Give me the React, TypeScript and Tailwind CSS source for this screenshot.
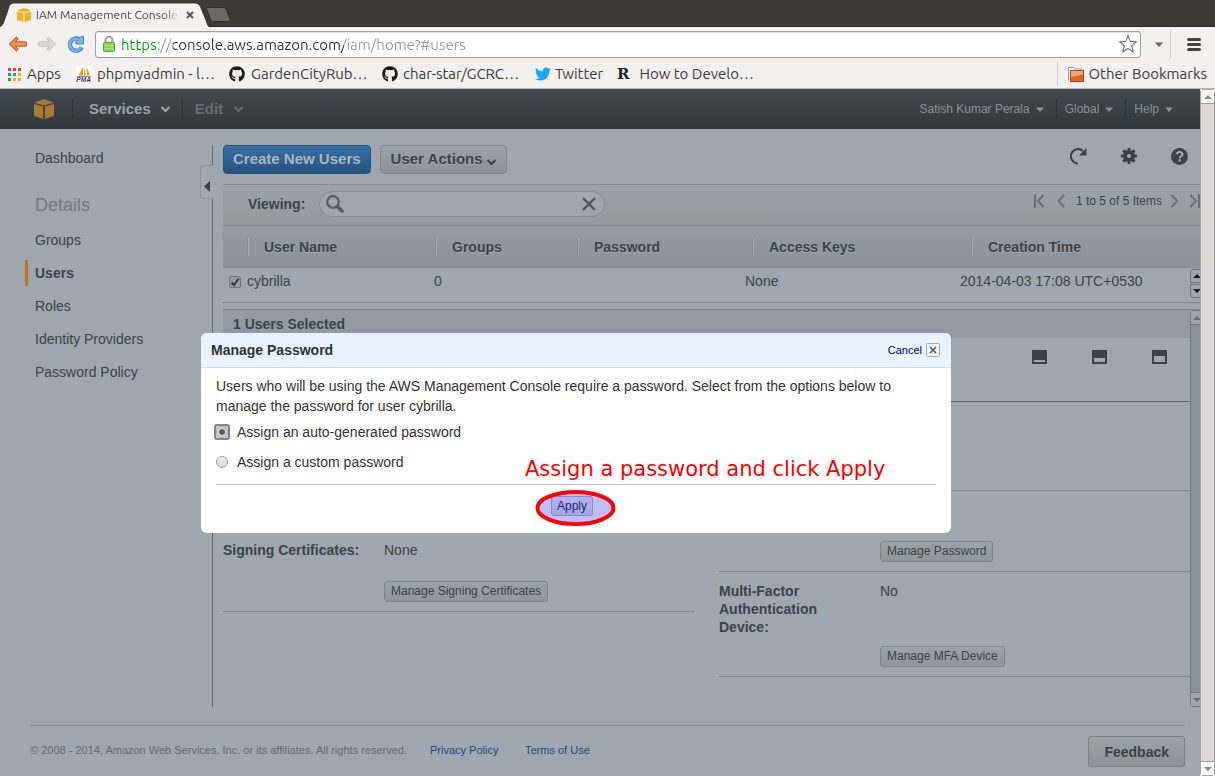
import React from "react";
import { FaGithub, FaTwitter } from "react-icons/fa";

const navItems = ["Groups", "Users", "Roles", "Identity Providers", "Password Policy"];

function Cube({ className, color }: { className: string; color: string }) {
  return (
    <svg viewBox="0 0 20 20" className={className} fill={color} aria-hidden="true">
      <path d="M0 3.6 10 0l10 3.6L10 6.4z" />
      <path d="M0 5l9.2 2.6V20L0 17z" />
      <path d="M20 5l-9.2 2.6V20L20 17z" />
    </svg>
  );
}

function Chevron({ className }: { className: string }) {
  return (
    <svg viewBox="0 0 9 6" className={className} aria-hidden="true">
      <path d="M0.5 1 4.5 5 8.5 1" fill="none" stroke="currentColor" strokeWidth="2.2" />
    </svg>
  );
}

function Caret() {
  return (
    <svg viewBox="0 0 8 5" className="h-[5px] w-2" aria-hidden="true">
      <path d="M0 0.5h8L4 5z" fill="currentColor" />
    </svg>
  );
}

function PmaIcon() {
  return (
    <svg viewBox="0 0 16 16" className="size-4 shrink-0" aria-hidden="true">
      <rect width="16" height="16" fill="#fff" />
      <path d="M7 1 2.5 9.5H7zM8.2 1.5V9.5H10zM10.5 2c2 2 3 5 3.3 7.5H11z" fill="#f6a000" />
      <path d="M1 10h14l-.5 1H1.5z" fill="#8a8aa8" />
      <text x="0.3" y="15.8" fontSize="6.6" fontWeight="bold" fontStyle="italic" fill="#3a3a78" fontFamily="Liberation Sans">PMA</text>
    </svg>
  );
}

function AppsIcon() {
  const colors = ["#e83a35", "#e83a35", "#e83a35", "#1fa05a", "#3c7fe0", "#f2b50f", "#1fa05a", "#f2b50f", "#f2b50f"];
  return (
    <svg viewBox="0 0 13 13" className="size-[13px] shrink-0" aria-hidden="true">
      {colors.map((c, i) => (
        <rect key={i} x={(i % 3) * 5} y={Math.floor(i / 3) * 5} width="3" height="3" fill={c} />
      ))}
    </svg>
  );
}

function TabStrip() {
  return (
    <div className="flex h-[27px] items-end border-b border-[#2c2b28] bg-[#3c3b37]">
      <div className="relative -mb-px h-6 w-[209px] shrink-0">
        <svg viewBox="0 0 209 24" className="absolute inset-0 h-6 w-[209px]" aria-hidden="true">
          <path d="M0 24C4 22 4 19 6 14L9 5C10 1.5 11 0.5 15 0.5H194C198 0.5 199 1.5 200.500 5L205 16C207 21 207 23 209 24z" fill="#f2f1f0" />
        </svg>
        <div className="relative flex h-6 items-center pl-[17px] pr-[13px]">
          <Cube color="#f5b324" className="h-[14px] w-[14px] shrink-0" />
          <span className="ml-[5px] min-w-0 flex-1 whitespace-nowrap text-[12px] text-[#4a4a4a] [mask-image:linear-gradient(to_right,#000_90%,transparent)]">
            IAM Management Console
          </span>
          <button aria-label="Close tab" className="ml-[5px] flex size-3 items-center justify-center text-[#555]">
            <svg viewBox="0 0 8 8" className="size-2" aria-hidden="true">
              <path d="M1 1l6 6M7 1 1 7" stroke="currentColor" strokeWidth="1.9" />
            </svg>
          </button>
        </div>
      </div>
      <button aria-label="New tab" className="mb-1 -ml-1">
        <svg viewBox="0 0 26 15" className="h-[15px] w-[26px]" aria-hidden="true">
          <path d="M3 0.5H18C21 0.5 21 2 22 4l2.500 7c1 2.500 .5 3.500-2 3.500H9c-3 0-3-1-4-3.500L2 3C1.500 1.500 1.500 .5 3 .5z" fill="#6a6964" stroke="#2f2e2b" />
        </svg>
      </button>
    </div>
  );
}

function Toolbar() {
  return (
    <div className="flex h-[33px] items-center bg-[#f2f1f0] pl-2 pr-[14px] pt-px">
      <button aria-label="Back">
        <svg viewBox="0 0 20 16" className="h-4 w-5" aria-hidden="true">
          <path d="M8.500 1.200 1.500 8l7 6.800 1.600-1.600-2.600-2.900H16.500a2.300 2.300 0 0 0 0-4.600H7.500l2.600-2.900z" fill="#f08c55" stroke="#cc5a20" strokeWidth="1.100" strokeLinejoin="round" />
        </svg>
      </button>
      <button aria-label="Forward" className="ml-[9px]">
        <svg viewBox="0 0 20 16" className="h-4 w-5" aria-hidden="true">
          <path d="M11.500 1.200 18.500 8l-7 6.800-1.600-1.600 2.600-2.900H3.500a2.300 2.300 0 0 1 0-4.600H12.500L9.900 2.800z" fill="#dad8d5" stroke="#c6c4c0" strokeLinejoin="round" />
        </svg>
      </button>
      <button aria-label="Reload" className="ml-[10px]">
        <svg viewBox="0 0 18 18" className="size-[18px]" aria-hidden="true">
          <path d="M14.800 12.200A6.200 6.200 0 1 1 12.500 4.300" fill="none" stroke="#4a86c2" strokeWidth="4.400" />
          <path d="M16.500 1.500v7.500H8.800V6.500l5.500-5z" fill="#7db0e4" stroke="#4a86c2" />
          <path d="M14.300 12A6 6 0 1 1 12.500 5" fill="none" stroke="#7db0e4" strokeWidth="2.600" />
        </svg>
      </button>
      <div className="ml-[10px] flex h-[27px] flex-1 items-center rounded-[3px] border border-[#a09f9b] bg-white pl-[7px] pr-[2px] shadow-[inset_0_1px_0_#e4e3e1]">
        <svg viewBox="0 0 12 16" className="h-4 w-3 shrink-0" aria-hidden="true">
          <path d="M2.500 7V4.500a3.500 3.500 0 0 1 7 0V7" fill="none" stroke="#7b7b7b" strokeWidth="2" />
          <path d="M2.500 7V4.500a3.500 3.500 0 0 1 7 0V7" fill="none" stroke="#e4e4e4" strokeWidth=".7" />
          <rect x=".5" y="6.500" width="11" height="9" rx="1" fill="#8ad45c" stroke="#5aa138" />
          <path d="M1.500 9.500h9M1.500 12.500h9" stroke="#a5e37e" />
        </svg>
        <input
          aria-label="Address"
          defaultValue="https://console.aws.amazon.com/iam/home?#users"
          className="ml-1.5 h-[25px] min-w-0 flex-1 bg-[linear-gradient(to_right,#0a9b0a_35px,#999_35px,#999_52px,#333_52px,#333_223px,#999_223px)] bg-clip-text text-[15px] text-[#333] outline-none [-webkit-text-fill-color:transparent]"
        />
        <button aria-label="Bookmark this page">
          <svg viewBox="0 0 20 20" className="size-5" aria-hidden="true">
            <path d="M10 1.500l2.300 5.900 6.200.4-4.800 4 1.600 6.200L10 14.600 4.700 18l1.600-6.200-4.800-4 6.200-.4z" fill="#fff" stroke="#777" strokeWidth="1.200" strokeLinejoin="round" />
          </svg>
        </button>
      </div>
      <button aria-label="More tools" className="ml-[14px] text-[#666]">
        <Caret />
      </button>
      <div className="ml-[7px] h-7 w-px bg-[#d3d1ce]" />
      <button aria-label="Menu" className="ml-4">
        <svg viewBox="0 0 14 13" className="h-[13px] w-[14px]" aria-hidden="true">
          <path d="M1.500 1.500h11M1.500 6.500h11M1.500 11.500h11" stroke="#444" strokeWidth="3" strokeLinecap="round" />
        </svg>
      </button>
    </div>
  );
}

function Bookmarks() {
  const link = "flex shrink-0 items-center whitespace-nowrap";
  return (
    <nav aria-label="Bookmarks" className="flex h-[29px] items-center border-b border-[#b6b4b1] bg-[#f2f1f0] px-2 text-[15px] text-[#3c3c3c]">
      <a href="#apps" className={link + " w-[68px] gap-[6px]"}><AppsIcon />Apps</a>
      <a href="#pma" className={link + " w-[153px] gap-[5px]"}><PmaIcon />phpmyadmin - l…</a>
      <a href="#garden" className={link + " w-[153px] gap-[6px]"}><FaGithub className="size-4 text-[#1b1b1b]" />GardenCityRub…</a>
      <a href="#gcrc" className={link + " w-[153px] gap-[5px]"}><FaGithub className="size-4 text-[#1b1b1b]" />char-star/GCRC…</a>
      <a href="#twitter" className={link + " w-[82px] gap-1"}><FaTwitter className="size-4 text-[#10a8ee]" />Twitter</a>
      <a href="#howto" className={link + " gap-[10px]"}>
        <span className="font-['DejaVu_Serif',serif] text-[15px] leading-4 font-bold text-[#222]">R</span>
        How to Develo…
      </a>
      <div className="ml-auto flex items-center">
        <div className="mr-[10px] h-6 w-px bg-[#d3d1ce]" />
        <a href="#other" className={link + " gap-1"}>
          <svg viewBox="0 0 16 15" className="h-[15px] w-4" aria-hidden="true">
            <path d="M.5 13.500V.5h5l1 1.500h7v3" fill="#fff" stroke="#999" />
            <rect x="2.500" y="3.500" width="13" height="11" fill="#e2662b" stroke="#b94415" />
            <path d="M3 4h12v3.500L3 10z" fill="#f0a878" />
          </svg>
          Other Bookmarks
        </a>
      </div>
    </nav>
  );
}

function ConsoleHeader() {
  const sep = "h-5 w-px bg-[#2a3036]";
  return (
    <header className="flex h-10 items-center bg-linear-to-b from-[#42494f] to-[#30373d] pl-[34px] pr-[27px] text-[#899197] [text-shadow:0_-1px_0_#22282d]">
      <a href="#home" aria-label="AWS home"><Cube color="#a97a2f" className="size-5" /></a>
      <div className={sep + " ml-[18px]"} />
      <button className="ml-4 flex items-center gap-[10px] text-[15px] font-bold text-[#9aa1a7]">Services<Chevron className="h-[6px] w-[9px]" /></button>
      <div className={sep + " ml-3"} />
      <button className="ml-3 flex items-center gap-[11px] text-[15px] font-bold text-[#646c72]">Edit<Chevron className="h-[6px] w-[9px]" /></button>
      <div className="ml-auto flex items-center text-[12px]">
        <button className="flex items-center gap-[6px]">Satish Kumar Perala<Caret /></button>
        <div className={sep + " ml-3 mr-2"} />
        <button className="flex items-center gap-[6px]">Global<Caret /></button>
        <div className={sep + " ml-3 mr-2"} />
        <button className="flex items-center gap-[6px]">Help<Caret /></button>
      </div>
    </header>
  );
}

function Sidebar() {
  return (
    <nav aria-label="IAM" className="w-[200px] shrink-0 pl-[25px] pt-4 text-[14px]">
      <a href="#dashboard" className="block pl-[10px] leading-[26px]">Dashboard</a>
      <h2 className="mt-[21px] mb-[9px] pl-[10px] text-[18px] leading-[26px] text-[#737a81]">Details</h2>
      <ul className="flex flex-col gap-[7px]">
        {navItems.map((item) => (
          <li key={item}>
            <a
              href={"#" + item}
              className={
                item === "Users"
                  ? "block border-l-[3px] border-[#b07a2c] pl-[7px] leading-[26px] font-bold"
                  : "block pl-[10px] leading-[26px]"
              }
            >
              {item}
            </a>
          </li>
        ))}
      </ul>
    </nav>
  );
}

function Divider() {
  return (
    <div className="flex w-[23px] shrink-0 flex-col pt-4">
      <div className="ml-3 h-5 w-px bg-[#646b72]" />
      <button aria-label="Collapse sidebar" className="flex h-[34px] w-[13px] items-center justify-center rounded-l-[4px] border border-r-0 border-[#8a9198] pt-2">
        <svg viewBox="0 0 6 11" className="h-[11px] w-[6px]" aria-hidden="true"><path d="M6 0v11L0 5.500z" fill="#3a4046" /></svg>
      </button>
      <div className="ml-3 w-px flex-1 bg-[#646b72]" />
    </div>
  );
}

function PageIcon({ d, label, className }: { d: string; label: string; className: string }) {
  return (
    <button aria-label={label} className={className}>
      <svg viewBox="0 0 10 14" className="h-[14px] w-[10px]" aria-hidden="true">
        <path d={d} fill="none" stroke="#6a7178" strokeWidth="2" />
      </svg>
    </button>
  );
}

function ListToolbar() {
  return (
    <div className="flex h-[42px] items-center overflow-hidden border-y border-[#858c94] bg-linear-to-b from-[#9ba2a9] to-[#92999f] pb-[2px] pl-[25px]">
      <label htmlFor="viewing" className="text-[14px] font-bold">Viewing:</label>
      <div className="ml-[14px] flex h-[26px] w-[286px] items-center rounded-full border border-[#858c94] bg-[#9fa6ad] pl-[6px] pr-2">
        <svg viewBox="0 0 18 18" className="size-[18px] shrink-0" aria-hidden="true">
          <circle cx="7" cy="7" r="5.800" fill="none" stroke="#565d64" strokeWidth="2.200" />
          <path d="M11.500 11.500l4.500 4.500" stroke="#565d64" strokeWidth="3.600" strokeLinecap="round" />
        </svg>
        <input id="viewing" type="text" className="mx-1 h-5 min-w-0 flex-1 bg-transparent text-[14px] outline-none" />
        <button aria-label="Clear search">
          <svg viewBox="0 0 14 14" className="size-[14px]" aria-hidden="true"><path d="M1 1l12 12M13 1 1 13" stroke="#50575e" strokeWidth="2.400" /></svg>
        </button>
      </div>
      <div className="ml-auto flex items-center pb-[6px] text-[12px]">
        <PageIcon label="First page" className="mr-3" d="M1 0v14M9.500 1 4 7l5.500 6" />
        <PageIcon label="Previous page" className="mr-[10px]" d="M8 1 2.500 7 8 13" />
        <span>1 to 5 of 5 Items</span>
        <PageIcon label="Next page" className="ml-2" d="M1.500 1 7 7l-5.500 6" />
        <PageIcon label="Last page" className="ml-[10px]" d="M0.500 1 6 7l-5.500 6M9 0v14" />
      </div>
    </div>
  );
}

function UserTable() {
  const th = "pl-0 text-left";
  const inner = "block border-l border-[#858c94] pl-4 leading-[18px] shadow-[inset_1px_0_0_#a5acb2]";
  return (
    <>
      <table className="h-[42px] w-full table-fixed border-b border-[#858c94] bg-linear-to-b from-[#949ba2] to-[#8b9298] text-[14px] font-bold [text-shadow:0_1px_0_#a5acb2]">
        <thead>
          <tr>
            <th scope="col" aria-label="Selected" className="w-6" />
            <th scope="col" className={th + " w-[188px]"}><span className={inner}>User Name</span></th>
            <th scope="col" className={th + " w-[142px]"}><span className={inner}>Groups</span></th>
            <th scope="col" className={th + " w-[175px]"}><span className={inner}>Password</span></th>
            <th scope="col" className={th + " w-[219px]"}><span className={inner}>Access Keys</span></th>
            <th scope="col" className={th}><span className={inner}>Creation Time</span></th>
          </tr>
        </thead>
      </table>
      <div className="flex h-[35px] items-start border-b border-[#7d848b]">
        <table className="min-w-0 flex-1 table-fixed text-[14px]">
          <tbody>
            <tr className="h-[27px]">
              <td className="w-6 pl-[6px]">
                <input
                  type="checkbox"
                  defaultChecked
                  aria-label="Select cybrilla"
                  className="block size-3 appearance-none rounded-[2px] border border-[#6f767d] bg-[#979ea5] bg-[url('data:image/svg+xml,%3Csvg%20xmlns=%22http://www.w3.org/2000/svg%22%20viewBox=%220%200%2010%2010%22%3E%3Cpath%20d=%22M1.500%205.500l2.300%202.700%205-6.700%22%20fill=%22none%22%20stroke=%22%23343a40%22%20stroke-width=%222%22/%3E%3C/svg%3E')]"
                />
              </td>
              <td className="w-[187px]">cybrilla</td>
              <td className="w-[140px]">0</td>
              <td className="w-[171px]" />
              <td className="w-[215px]">None</td>
              <td>2014-04-03 17:08 UTC+0530</td>
            </tr>
          </tbody>
        </table>
        <div className="flex w-[10px] shrink-0 flex-col overflow-hidden pt-px">
          <button aria-label="Scroll up" className="flex h-[14px] w-[14px] items-center justify-center rounded-tl-[3px] border border-[#6d747b]">
            <svg viewBox="0 0 8 4" className="h-1 w-2" aria-hidden="true"><path d="M0 4h8L4 0z" fill="#1a1e22" /></svg>
          </button>
          <button aria-label="Scroll down" className="mt-px flex h-[14px] w-[14px] items-center justify-center rounded-bl-[3px] border border-[#6d747b]">
            <svg viewBox="0 0 8 4" className="h-1 w-2" aria-hidden="true"><path d="M0 0h8L4 4z" fill="#1a1e22" /></svg>
          </button>
        </div>
      </div>
    </>
  );
}

function SmallButton({ children }: { children: React.ReactNode }) {
  return (
    <button className="h-[21px] rounded-[3px] border border-[#7f868d] bg-linear-to-b from-[#9ba2a8] to-[#8e959b] px-[6px] text-[12px] leading-[19px] whitespace-nowrap">
      {children}
    </button>
  );
}

function Credential({ label, value, action }: { label?: string; value?: string; action: string }) {
  return (
    <section className="border-b border-[#7f868d] pt-[10px] pb-[9px] text-[14px] leading-[18px]">
      <div className="flex min-h-10 pb-[10px]">
        {label ? <h3 className="mr-5 w-[141px] shrink-0 font-bold">{label}</h3> : null}
        {value ? <span>{value}</span> : null}
      </div>
      <div className="flex pl-[161px]"><SmallButton>{action}</SmallButton></div>
    </section>
  );
}

function SizeIcon({ y, label }: { y: number; label: string }) {
  return (
    <button aria-label={label}>
      <svg viewBox="0 0 15 14" className="h-[14px] w-[15px]" aria-hidden="true">
        <path fillRule="evenodd" fill="#3b4147" d={`M0 0h15v14H0zM2 ${y}v${12 - y}h11v${y - 12}z`} />
      </svg>
    </button>
  );
}

function DetailPanel() {
  return (
    <div className="mt-[6px] flex flex-1 border-t border-[#7d848b]">
      <div className="min-w-0 flex-1">
        <h2 className="h-7 bg-[#939aa1] pl-[10px] text-[14px] leading-7 font-bold">1 Users Selected</h2>
        <div className="flex h-16 items-start justify-end gap-[45px] border-b border-[#5d646b] pt-3 pr-[23px]">
          <SizeIcon y={10} label="Small panel" />
          <SizeIcon y={8} label="Medium panel" />
          <SizeIcon y={6} label="Large panel" />
        </div>
        <div className="grid grid-cols-2 gap-[25px]">
          <div className="pt-[129px]">
            <Credential label="Signing Certificates:" value="None" action="Manage Signing Certificates" />
          </div>
          <div>
            <div className="h-[89px] border-b border-[#7f868d]" />
            <Credential action="Manage Password" />
            <Credential label="Multi-Factor Authentication Device:" value="No" action="Manage MFA Device" />
          </div>
        </div>
      </div>
      <div className="flex w-[10px] shrink-0 flex-col overflow-hidden">
        <div className="flex w-[14px] flex-1 flex-col justify-between rounded-l-[3px] border border-[#727980] bg-[#8c9098]">
          <div className="flex h-[14px] items-center justify-center border-b border-[#727980] bg-[#9fa6ad]">
            <svg viewBox="0 0 8 4" className="h-1 w-2" aria-hidden="true"><path d="M0 4h8L4 0z" fill="#676e75" /></svg>
          </div>
          <div className="flex h-[14px] items-center justify-center border-t border-[#727980] bg-[#9fa6ad]">
            <svg viewBox="0 0 8 4" className="h-1 w-2" aria-hidden="true"><path d="M0 0h8L4 4z" fill="#676e75" /></svg>
          </div>
        </div>
      </div>
    </div>
  );
}

function Main() {
  return (
    <main className="flex min-w-0 flex-1 flex-col pt-4">
      <div className="mb-[10px] flex h-[29px] items-start">
        <button className="h-[29px] rounded-[4px] border border-[#24507f] bg-linear-to-b from-[#3a70a4] to-[#24527f] px-[9px] text-[15px] font-bold text-[#a9b5c2]">Create New Users</button>
        <button className="ml-[9px] flex h-[29px] items-center gap-1 rounded-[4px] border border-[#7f868d] bg-linear-to-b from-[#9ba2a8] to-[#8b9298] px-[10px] text-[15px] font-bold [text-shadow:0_1px_0_#a5acb2]">
          User Actions<Chevron className="mt-1 h-[6px] w-[9px]" />
        </button>
        <div className="ml-auto flex items-center gap-[34px] pt-[2px] pr-3">
          <button aria-label="Refresh">
            <svg viewBox="0 0 17 18" className="h-[18px] w-[17px]" aria-hidden="true">
              <path d="M8 16.500A7.200 7.200 0 1 1 13 4" fill="none" stroke="#3b4147" strokeWidth="2" />
              <path d="M16.500 1v7.500H9z" fill="#3b4147" />
            </svg>
          </button>
          <button aria-label="Settings">
            <svg viewBox="0 0 16 16" className="size-4" fill="#3b4147" aria-hidden="true">
              <path fillRule="evenodd" d="M6.500 0h3v2.200l1.300.5 1.600-1.500 2.200 2.200-1.500 1.600.5 1.500H16v3h-2.200l-.6 1.500 1.500 1.500-2.200 2.200-1.600-1.500-1.400.6V16h-3v-2.200l-1.400-.6-1.600 1.500-2.200-2.200 1.500-1.600L2.200 9.500H0v-3h2.200l.6-1.500-1.500-1.600 2.200-2.200 1.600 1.500 1.400-.5zM8 6a2 2 0 1 0 0 4 2 2 0 0 0 0-4z" />
            </svg>
          </button>
          <button aria-label="Help">
            <svg viewBox="0 0 17 17" className="size-[17px]" aria-hidden="true">
              <circle cx="8.500" cy="8.500" r="8.500" fill="#3b4147" />
              <path d="M5.600 6.400C5.800 3.300 11.500 3.200 11.500 6.300c0 2-2.800 2-2.800 4" fill="none" stroke="#9fa6ad" strokeWidth="2.200" />
              <rect x="7.500" y="11.300" width="2.400" height="2.300" fill="#9fa6ad" />
            </svg>
          </button>
        </div>
      </div>
      <ListToolbar />
      <UserTable />
      <DetailPanel />
    </main>
  );
}

function Footer() {
  return (
    <footer className="mt-[18px] mr-[15px] ml-[30px] flex h-[51px] items-start border-t border-[#858c94] pt-[10px] text-[11px] leading-7">
      <span className="w-[400px] text-[#646b72]">© 2008 - 2014, Amazon Web Services, Inc. or its affiliates. All rights reserved.</span>
      <a href="#privacy" className="w-[95px] text-[#1f4a7c]">Privacy Policy</a>
      <a href="#terms" className="text-[#1f4a7c]">Terms of Use</a>
      <button className="ml-auto h-[31px] rounded-[3px] border border-[#7a8188] bg-linear-to-b from-[#9ba2a8] to-[#8b9298] px-[15px] text-[14px] font-bold">Feedback</button>
    </footer>
  );
}

function Option({ id, label, checked }: { id: string; label: string; checked?: boolean }) {
  return (
    <div className="flex h-[30px] items-center gap-2">
      <span className={checked ? "-ml-px flex size-[14px] items-center justify-center rounded-[2px] bg-[#cfcfcf] outline-2 outline-[#858585] -outline-offset-1" : "-ml-px flex size-[14px] items-center justify-center"}>
        <input
          id={id}
          type="radio"
          name="password-mode"
          defaultChecked={checked}
          className="size-3 appearance-none rounded-full border border-[#a3a3a3] bg-linear-to-b from-[#f0f0f0] to-[#d8d8d8] checked:bg-[radial-gradient(circle,#555_0_2px,#e0e0e0_4px)]"
        />
      </span>
      <label htmlFor={id}>{label}</label>
    </div>
  );
}

function PasswordDialog() {
  return (
    <div role="dialog" aria-labelledby="dialog-title" className="absolute top-[244px] left-[201px] w-[750px] overflow-hidden rounded-[6px] bg-white text-[14px] text-[#333]">
      <div className="flex h-[35px] items-center border-b border-[#c9dcf0] bg-[#eaf2fe] pr-[11px] pl-[10px]">
        <h1 id="dialog-title" className="font-bold">Manage Password</h1>
        <button className="ml-auto flex items-center gap-1 text-[11px] text-[#000080]">
          Cancel
          <svg viewBox="0 0 14 14" className="size-[14px]" aria-hidden="true">
            <rect x=".5" y=".5" width="13" height="13" rx="1" fill="#f3f3f3" stroke="#aaa" />
            <path d="M4 4l6 6M10 4l-6 6" stroke="#555" strokeWidth="1.700" />
          </svg>
        </button>
      </div>
      <div className="px-[15px] pt-2">
        <p className="leading-5">
          Users who will be using the AWS Management Console require a password. Select from the options below to
          manage the password for user cybrilla.
        </p>
        <div className="mt-px">
          <Option id="auto" label="Assign an auto-generated password" checked />
          <Option id="custom" label="Assign a custom password" />
        </div>
        <div className="mt-[7px] flex h-[49px] items-start border-t border-[#c5c5c5] pt-[11px] pl-[335px]">
          <button className="h-[20px] rounded-[3px] border border-[#bbb] bg-linear-to-b from-[#f0f0f0] to-[#dcdcdc] px-[5px] text-[12px] leading-[18px]">Apply</button>
        </div>
      </div>
      <p className="absolute top-[123px] left-[324px] font-['DejaVu_Sans',sans-serif] text-[21px] leading-[26px] whitespace-nowrap text-[#fe0000]">
        Assign a password and click Apply
      </p>
      <svg viewBox="0 0 82 38" className="pointer-events-none absolute top-[156px] left-[334px] h-[38px] w-[82px]" aria-hidden="true">
        <ellipse cx="40.500" cy="19" rx="38" ry="16" fill="#0000ff" fillOpacity=".25" stroke="#fe0000" strokeWidth="4" />
      </svg>
    </div>
  );
}

function PageScrollbar() {
  return (
    <div className="flex w-[15px] shrink-0 flex-col justify-between rounded-[3px] border border-[#a5a29e] bg-[#dcdad8]">
      <div className="flex h-[14px] items-center justify-center border-b border-[#a5a29e] bg-[#f8f8f7]">
        <svg viewBox="0 0 8 4" className="h-1 w-2" aria-hidden="true"><path d="M0 4h8L4 0z" fill="#8b8884" /></svg>
      </div>
      <div className="flex h-[14px] items-center justify-center border-t border-[#a5a29e] bg-[#f8f8f7]">
        <svg viewBox="0 0 8 4" className="h-1 w-2" aria-hidden="true"><path d="M0 0h8L4 4z" fill="#8b8884" /></svg>
      </div>
    </div>
  );
}

export default function App() {
  return (
    <div className="flex min-h-screen flex-col">
      <div className="font-['Ubuntu','Noto_Sans',sans-serif]">
        <TabStrip />
        <Toolbar />
        <Bookmarks />
      </div>
      <div className="flex flex-1 bg-white font-['Liberation_Sans',Arial,sans-serif]">
        <div className="relative flex min-w-0 flex-1 flex-col bg-[#9fa6ad] text-[#3d4349]">
          <ConsoleHeader />
          <div className="flex flex-1">
            <Sidebar />
            <Divider />
            <Main />
          </div>
          <Footer />
          <PasswordDialog />
        </div>
        <PageScrollbar />
      </div>
    </div>
  );
}
